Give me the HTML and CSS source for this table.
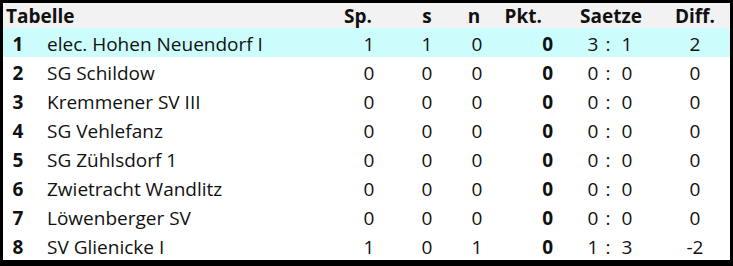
FILE: index.html
```html
<!DOCTYPE html>
<html lang="de">
<head>
<meta charset="utf-8">
<title>Tabelle</title>
<link rel="stylesheet" href="styles.css">
</head>
<body>
<div class="table">
  <div class="row head">
    <div class="c-title">Tabelle</div>
    <div class="c-sp h-sp">Sp.</div>
    <div class="c-s">s</div>
    <div class="c-n h-n">n</div>
    <div class="c-pkt h-pkt">Pkt.</div>
    <div class="c-saetze h-saetze">Saetze</div>
    <div class="c-diff">Diff.</div>
  </div>
  <div class="row hl">
    <div class="c-rank">1</div><div class="c-name">elec. Hohen Neuendorf I</div>
    <div class="c-sp">1</div><div class="c-s">1</div><div class="c-n">0</div><div class="c-pkt">0</div>
    <div class="c-saetze"><span class="sa">3</span><span class="sc">:</span><span class="sb">1</span></div>
    <div class="c-diff">2</div>
  </div>
  <div class="row">
    <div class="c-rank">2</div><div class="c-name">SG Schildow</div>
    <div class="c-sp">0</div><div class="c-s">0</div><div class="c-n">0</div><div class="c-pkt">0</div>
    <div class="c-saetze"><span class="sa">0</span><span class="sc">:</span><span class="sb">0</span></div>
    <div class="c-diff">0</div>
  </div>
  <div class="row">
    <div class="c-rank">3</div><div class="c-name">Kremmener SV III</div>
    <div class="c-sp">0</div><div class="c-s">0</div><div class="c-n">0</div><div class="c-pkt">0</div>
    <div class="c-saetze"><span class="sa">0</span><span class="sc">:</span><span class="sb">0</span></div>
    <div class="c-diff">0</div>
  </div>
  <div class="row">
    <div class="c-rank">4</div><div class="c-name">SG Vehlefanz</div>
    <div class="c-sp">0</div><div class="c-s">0</div><div class="c-n">0</div><div class="c-pkt">0</div>
    <div class="c-saetze"><span class="sa">0</span><span class="sc">:</span><span class="sb">0</span></div>
    <div class="c-diff">0</div>
  </div>
  <div class="row">
    <div class="c-rank">5</div><div class="c-name">SG Zühlsdorf 1</div>
    <div class="c-sp">0</div><div class="c-s">0</div><div class="c-n">0</div><div class="c-pkt">0</div>
    <div class="c-saetze"><span class="sa">0</span><span class="sc">:</span><span class="sb">0</span></div>
    <div class="c-diff">0</div>
  </div>
  <div class="row">
    <div class="c-rank">6</div><div class="c-name">Zwietracht Wandlitz</div>
    <div class="c-sp">0</div><div class="c-s">0</div><div class="c-n">0</div><div class="c-pkt">0</div>
    <div class="c-saetze"><span class="sa">0</span><span class="sc">:</span><span class="sb">0</span></div>
    <div class="c-diff">0</div>
  </div>
  <div class="row">
    <div class="c-rank">7</div><div class="c-name">Löwenberger SV</div>
    <div class="c-sp">0</div><div class="c-s">0</div><div class="c-n">0</div><div class="c-pkt">0</div>
    <div class="c-saetze"><span class="sa">0</span><span class="sc">:</span><span class="sb">0</span></div>
    <div class="c-diff">0</div>
  </div>
  <div class="row">
    <div class="c-rank">8</div><div class="c-name">SV Glienicke I</div>
    <div class="c-sp">1</div><div class="c-s">0</div><div class="c-n">1</div><div class="c-pkt">0</div>
    <div class="c-saetze"><span class="sa">1</span><span class="sc">:</span><span class="sb">3</span></div>
    <div class="c-diff">-2</div>
  </div>
</div>
</body>
</html>
```
FILE: styles.css
```css
html, body {
  margin: 0;
  padding: 0;
  background: #000;
}
.table {
  box-sizing: border-box;
  width: 733px;
  height: 266px;
  border-style: solid;
  border-color: #000;
  border-width: 3px 3px 6px 3px;
  background: #fff;
  overflow: hidden;
  font-family: "Open Sans", sans-serif;
  font-size: 19px;
  color: #111;
}
.row {
  display: flex;
  align-items: center;
  height: 29px;
  padding-top: 2px;
  box-sizing: border-box;
  background: #fff;
}
.row.head {
  height: 25px;
  padding-top: 1px;
  background: #f2f2f2;
  font-weight: bold;
}
.row.hl {
  background: #cdfcfd;
}
.row > div {
  flex: none;
  white-space: nowrap;
}
.c-title {
  width: 337px;
  padding-left: 3px;
  box-sizing: border-box;
}
.c-rank {
  width: 30px;
  text-align: center;
  font-weight: bold;
}
.c-name {
  width: 307px;
  padding-left: 14px;
  box-sizing: border-box;
}
.c-sp { width: 58px; text-align: center; }
.c-s { width: 58px; text-align: center; }
.c-n { width: 42px; text-align: center; }
.c-pkt {
  width: 62px;
  text-align: right;
  padding-right: 7px;
  box-sizing: border-box;
  font-weight: bold;
}
.c-saetze {
  width: 100px;
  display: flex;
}
.c-diff { width: 70px; text-align: center; }

.h-sp { text-align: left; padding-left: 4px; box-sizing: border-box; }
.h-n { padding-right: 6px; box-sizing: border-box; }
.h-pkt { padding-right: 18px; }
.h-saetze { justify-content: center; padding-left: 2px; box-sizing: border-box; }

.sa { width: 43px; text-align: center; padding-left: 23px; box-sizing: border-box; }
.sc { width: 10px; text-align: center; }
.sb { width: 28px; text-align: center; }
```
